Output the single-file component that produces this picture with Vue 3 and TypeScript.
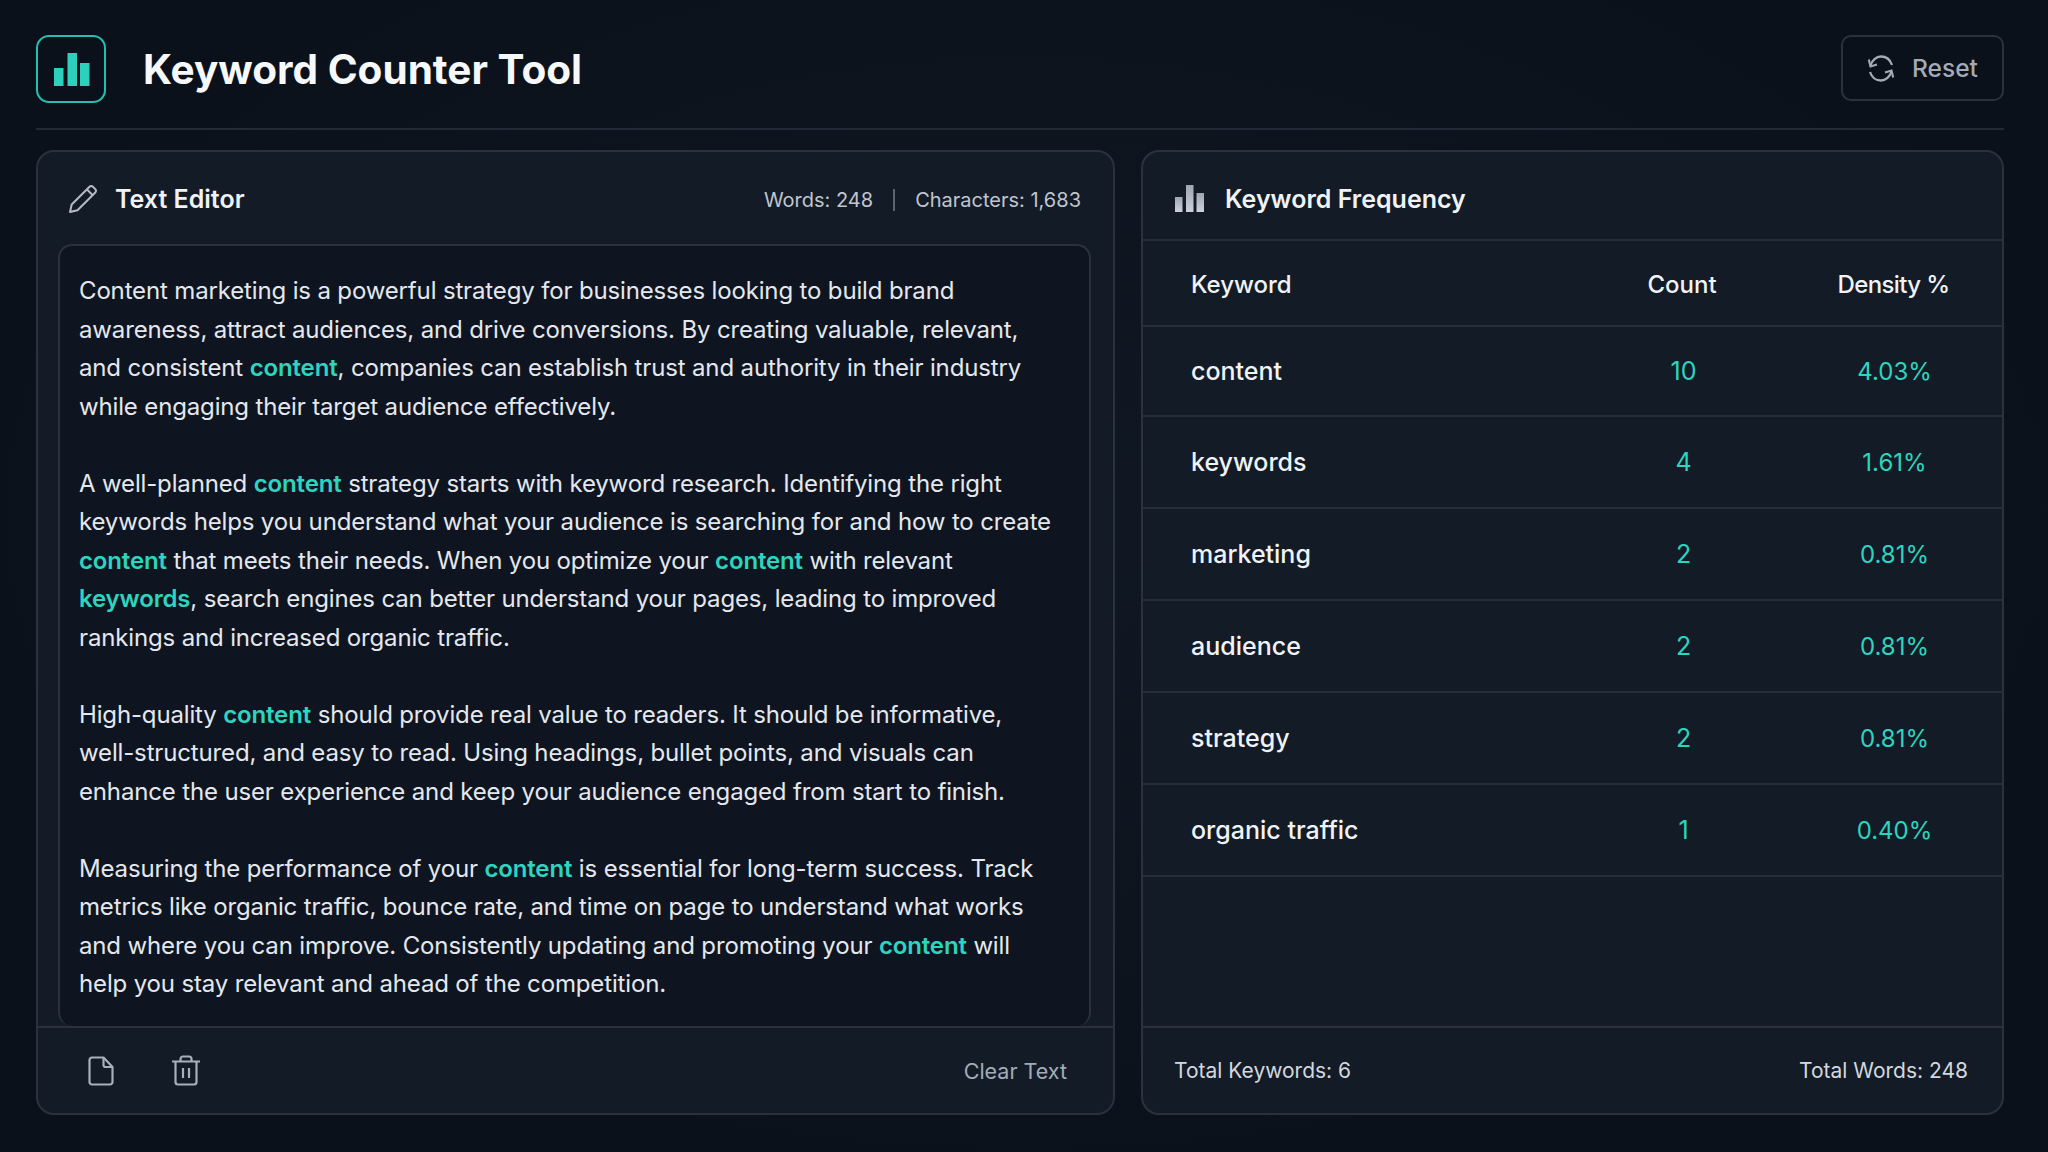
<script setup lang="ts">
interface Row { keyword: string; count: number; density: string }
const rows: Row[] = [
  { keyword: 'content', count: 10, density: '4.03%' },
  { keyword: 'keywords', count: 4, density: '1.61%' },
  { keyword: 'marketing', count: 2, density: '0.81%' },
  { keyword: 'audience', count: 2, density: '0.81%' },
  { keyword: 'strategy', count: 2, density: '0.81%' },
  { keyword: 'organic traffic', count: 1, density: '0.40%' },
]
</script>

<template>
  <div class="page">
    <header class="top">
      <div class="brand">
        <div class="logo">
          <svg width="36" height="34" viewBox="0 0 36 34">
            <rect x="0" y="15" width="9.5" height="18" fill="#2cd0bd" />
            <rect x="13.5" y="0" width="9.5" height="33" fill="#2cd0bd" />
            <rect x="26" y="10" width="9.5" height="23" fill="#2cd0bd" />
          </svg>
        </div>
        <h1>Keyword Counter Tool</h1>
      </div>
      <button class="reset">
        <svg width="28" height="29" viewBox="0 0 28 29" fill="none" stroke="#a3abb7" stroke-width="2.3">
          <path d="M3.500 11.500C5 6.500 9.200 2.500 14 2.500c4.900 0 9.200 3.200 11 8.500" />
          <path d="M24.500 17.500C23 22.500 18.800 26.500 14 26.500c-4.900 0-9.200-3.200-11-8.500" />
          <path d="M1.800 5.500l1.700 7 6.500-2" stroke-width="2.100" />
          <path d="M26.200 23.500l-1.700-7-6.500 2" stroke-width="2.100" />
        </svg>
        <span>Reset</span>
      </button>
    </header>

    <main class="columns">
      <section class="card">
        <div class="card-head edit-head">
          <div class="card-title">
            <svg width="30" height="30" viewBox="0 0 30 30" fill="none" stroke="#b4bbc6" stroke-width="2" stroke-linejoin="round">
              <path d="M2 28l1.700-7.500L21.500 2.700a2.400 2.400 0 0 1 3.400 0l2.400 2.400a2.400 2.400 0 0 1 0 3.400L9.500 26.300z" />
              <path d="M19 5.500l5.500 5.500" />
            </svg>
            <h2>Text Editor</h2>
          </div>
          <div class="stats">
            <span>Words: 248</span>
            <i class="sep"></i>
            <span>Characters: 1,683</span>
          </div>
        </div>
        <div class="editor">
          <p>Content marketing is a powerful strategy for businesses looking to build brand awareness, attract audiences, and drive conversions. By creating valuable, relevant, and consistent <b>content</b>, companies can establish trust and authority in their industry while engaging their target audience effectively.</p>
          <p>A well-planned <b>content</b> strategy starts with keyword research. Identifying the right keywords helps you understand what your audience is searching for and how to create <b>content</b> that meets their needs. When you optimize your <b>content</b> with relevant <b>keywords</b>, search engines can better understand your pages, leading to improved rankings and increased organic traffic.</p>
          <p>High-quality <b>content</b> should provide real value to readers. It should be informative, well-structured, and easy to read. Using headings, bullet points, and visuals can enhance the user experience and keep your audience engaged from start to finish.</p>
          <p>Measuring the performance of your <b>content</b> is essential for long-term success. Track metrics like organic traffic, bounce rate, and time on page to understand what works and where you can improve. Consistently updating and promoting your <b>content</b> will help you stay relevant and ahead of the competition.</p>
        </div>
        <div class="card-foot">
          <div class="tools">
            <svg width="26" height="30" viewBox="0 0 26 30" fill="none" stroke="#a8b0bc" stroke-width="2.200" stroke-linejoin="round">
              <path d="M4 1.500h11.500L24.500 11v15a2.500 2.500 0 0 1-2.500 2.500H4A2.500 2.500 0 0 1 1.500 26V4A2.500 2.500 0 0 1 4 1.500z" />
              <path d="M15.500 1.500V9a2 2 0 0 0 2 2h7" />
            </svg>
            <svg width="30" height="31" viewBox="0 0 30 31" fill="none" stroke="#a8b0bc" stroke-width="2.200" stroke-linejoin="round">
              <path d="M1 6.500h28" />
              <path d="M9.500 6.500V4a2.500 2.500 0 0 1 2.500-2.500h6A2.500 2.500 0 0 1 20.500 4v2.500" />
              <path d="M4.500 6.500V27a2.500 2.500 0 0 0 2.500 2.500h16a2.500 2.500 0 0 0 2.500-2.500V6.500" />
              <path d="M12 13v10M18 13v10" />
            </svg>
          </div>
          <span class="clear">Clear Text</span>
        </div>
      </section>

      <section class="card">
        <div class="card-head freq-head">
          <div class="card-title">
            <svg class="bars" width="30" height="28" viewBox="0 0 30 28">
              <defs>
                <linearGradient id="barGrey" x1="0" y1="0" x2="0" y2="1">
                  <stop offset="0" stop-color="#9ea6b3" />
                  <stop offset="1" stop-color="#ccd2db" />
                </linearGradient>
              </defs>
              <rect x="0" y="12" width="7.500" height="15" fill="url(#barGrey)" />
              <rect x="11" y="0" width="7.500" height="27" fill="url(#barGrey)" />
              <rect x="21.500" y="8" width="7.500" height="19" fill="url(#barGrey)" />
            </svg>
            <h2>Keyword Frequency</h2>
          </div>
        </div>
        <div class="table">
          <div class="row head">
            <span>Keyword</span>
            <span class="num">Count</span>
            <span class="num dens">Density %</span>
          </div>
          <div v-for="r in rows" :key="r.keyword" class="row">
            <span class="kw">{{ r.keyword }}</span>
            <span class="num teal">{{ r.count }}</span>
            <span class="num teal pct">{{ r.density }}</span>
          </div>
        </div>
        <div class="card-foot totals">
          <span>Total Keywords: 6</span>
          <span>Total Words: 248</span>
        </div>
      </section>
    </main>
  </div>
</template>

<style>
html, body { margin: 0; background: #0c121c; }
</style>

<style scoped>
.page {
  box-sizing: border-box;
  width: 2048px;
  height: 1152px;
  padding: 35px 44px 37px 36px;
  display: flex;
  flex-direction: column;
  font-family: Inter, "Liberation Sans", sans-serif;
  color: #e8ecf1;
  background: radial-gradient(ellipse at 50% 45%, #101823 0%, #0b111b 75%);
}
.top {
  display: flex;
  justify-content: space-between;
  align-items: flex-start;
  height: 95px;
  box-sizing: border-box;
  border-bottom: 2px solid #222a36;
  flex: none;
}
.brand { display: flex; align-items: center; gap: 37px; }
.logo {
  box-sizing: border-box;
  width: 70px;
  height: 68px;
  border: 2.500px solid #23bfb0;
  border-radius: 13px;
  display: flex;
  align-items: center;
  justify-content: center;
  padding-left: 2px;
  padding-top: 1px;
}
h1 {
  margin: 0;
  font-size: 40.500px;
  font-weight: 700;
  color: #f6f8fa;
}
.reset {
  box-sizing: border-box;
  width: 163px;
  height: 66px;
  background: transparent;
  border: 2px solid #2a323e;
  border-radius: 10px;
  color: #a3abb7;
  font: 500 24.500px Inter, "Liberation Sans", sans-serif;
  display: flex;
  align-items: center;
  justify-content: center;
  gap: 17px;
  padding: 0;
}
.columns {
  flex: 1;
  min-height: 0;
  margin-top: 20px;
  display: grid;
  grid-template-columns: 1079px 1fr;
  gap: 26px;
}
.card {
  box-sizing: border-box;
  min-height: 0;
  display: flex;
  flex-direction: column;
  background: #131b27;
  border: 2px solid #2b323e;
  border-radius: 18px;
  overflow: hidden;
}
.card-head {
  flex: none;
  height: 92px;
  box-sizing: border-box;
  display: flex;
  align-items: center;
  justify-content: space-between;
  padding: 0 32px 0 30px;
}
.edit-head { padding-top: 2px; }
.freq-head {
  height: 89px;
  padding-left: 32px;
  padding-top: 6px;
  border-bottom: 2px solid #252d39;
}
.card-title { display: flex; align-items: center; gap: 17px; }
.freq-head .card-title { gap: 20px; }
h2 {
  margin: 0;
  font-size: 25px;
  font-weight: 600;
  color: #f0f3f6;
}
.stats {
  display: flex;
  align-items: center;
  gap: 20px;
  font-size: 20px;
  color: #c0c6cf;
  padding-top: 2px;
}
.sep { width: 2px; height: 22px; background: #5b6470; }
.editor {
  flex: 1;
  min-height: 0;
  margin: 0 22px 0 20px;
  box-sizing: border-box;
  background: #0e1520;
  border: 2px solid #2b323e;
  border-bottom: none;
  border-radius: 14px;
  padding: 26px 30px 0 19px;
  font-size: 24px;
  letter-spacing: -0.150px;
  line-height: 38.500px;
  color: #e4e8ee;
  overflow: hidden;
}
.editor p { margin: 0 0 38.500px; }
.editor b { color: #2dd4bf; font-weight: 600; }
.card-foot {
  flex: none;
  height: 87px;
  box-sizing: border-box;
  border-top: 2px solid #2b323e;
  display: flex;
  align-items: center;
  justify-content: space-between;
  padding: 0 46px 0 50px;
}
.tools { display: flex; align-items: center; gap: 57px; }
.clear { font-size: 21.500px; color: #a3abb7; }
.table { flex: 1; min-height: 0; }
.row {
  box-sizing: border-box;
  height: 92px;
  display: grid;
  grid-template-columns: 1fr 140px 140px;
  column-gap: 71px;
  align-items: center;
  padding: 0 39px 0 48px;
  border-bottom: 2px solid #252d39;
  font-size: 25px;
  font-weight: 500;
  color: #f0f3f6;
}
.row.head { height: 86px; font-size: 24px; padding-top: 3px; }
.row.head + .row { height: 90px; }
.num { text-align: center; }
.dens { letter-spacing: -0.600px; padding-left: 1px; }
.teal { color: #2dd4bf; font-weight: 400; padding-left: 3px; }
.pct { font-size: 24px; }
.totals {
  padding: 0 34px 0 31px;
  font-size: 21px;
  color: #d3d8df;
}
</style>
